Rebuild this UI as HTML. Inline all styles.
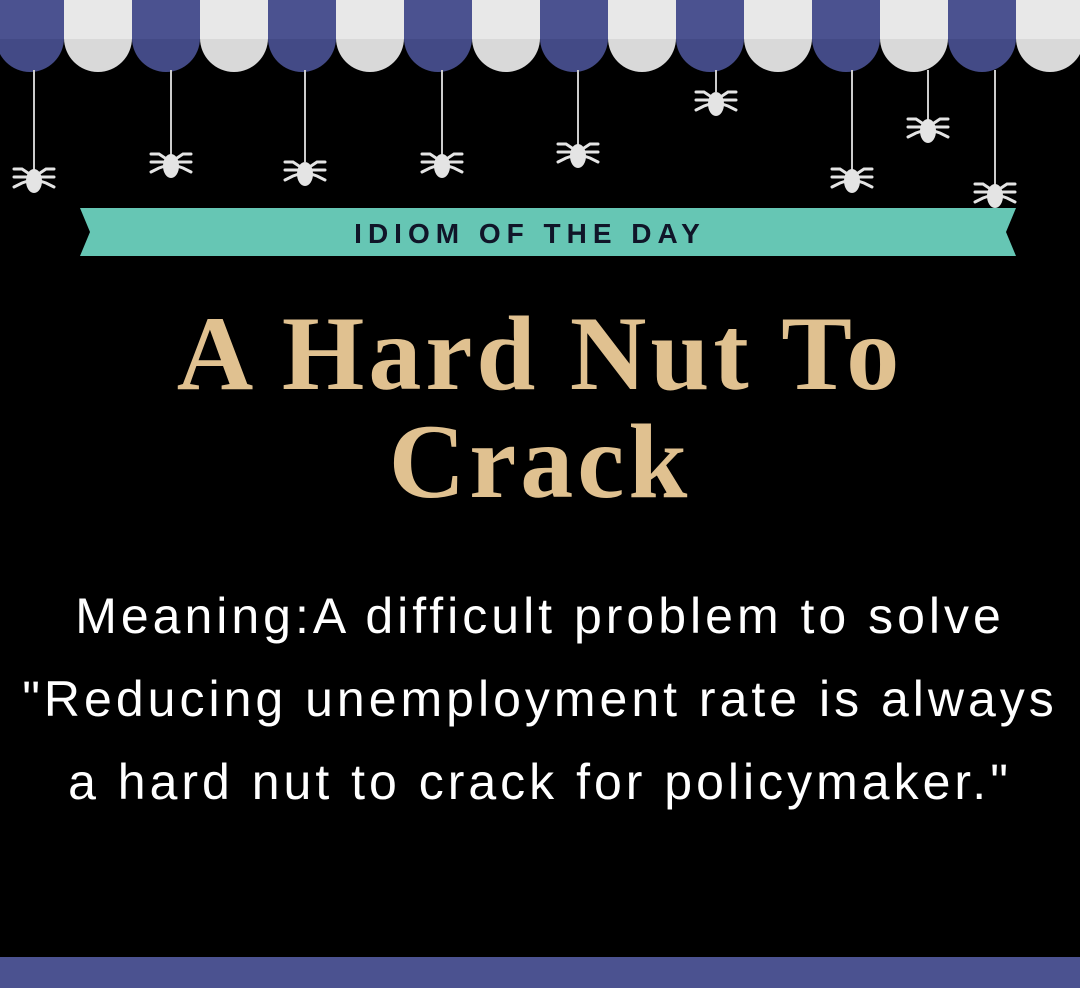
<!DOCTYPE html>
<html><head><style>
body{margin:0;width:1080px;height:988px;background:#000;position:relative;overflow:hidden;font-family:"Liberation Sans",sans-serif}
.s{position:absolute;top:0;width:68px;height:72px;border-radius:0 0 34px 34px;overflow:hidden}
.b{background:#434a86}.b:before{content:"";position:absolute;left:0;top:0;width:100%;height:39px;background:#4b5290}
.w{background:#d9d9d9}.w:before{content:"";position:absolute;left:0;top:0;width:100%;height:39px;background:#e8e8e8}
.t{position:absolute;left:0;width:1080px;text-align:center;white-space:nowrap}
</style></head><body>
<div id="aw"></div>
<svg width="1080" height="260" style="position:absolute;left:0;top:0">
<defs><g id="sp" fill="#e4e4e4" stroke="#e4e4e4" stroke-width="3" stroke-linecap="round">
<ellipse cx="0" cy="4" rx="8" ry="12" stroke="none"/>
<polyline fill="none" points="-6,-4 -12,-8 -20,-8"/><polyline fill="none" points="-6,0 -20,0"/><polyline fill="none" points="-6,4 -12,6 -20,10"/>
<polyline fill="none" points="6,-4 12,-8 20,-8"/><polyline fill="none" points="6,0 20,0"/><polyline fill="none" points="6,4 12,6 20,10"/>
</g></defs>
<g stroke="#ccc" stroke-width="2">
<line x1="34" y1="70" x2="34" y2="170"/><line x1="171" y1="70" x2="171" y2="155"/><line x1="305" y1="70" x2="305" y2="162"/><line x1="442" y1="70" x2="442" y2="155"/><line x1="578" y1="70" x2="578" y2="145"/><line x1="716" y1="70" x2="716" y2="92"/><line x1="852" y1="70" x2="852" y2="170"/><line x1="928" y1="70" x2="928" y2="120"/><line x1="995" y1="70" x2="995" y2="185"/>
</g>
<use href="#sp" x="34" y="177"/><use href="#sp" x="171" y="162"/><use href="#sp" x="305" y="170"/><use href="#sp" x="442" y="162"/><use href="#sp" x="578" y="152"/><use href="#sp" x="716" y="100"/><use href="#sp" x="852" y="177"/><use href="#sp" x="928" y="127"/><use href="#sp" x="995" y="192"/>
<polygon points="80,208 1016,208 1006,232 1016,256 80,256 90,232" fill="#66c6b4"/>
<text x="530" y="243" text-anchor="middle" font-family="Liberation Sans" font-weight="bold" font-size="28" letter-spacing="6" fill="#101528">IDIOM OF THE DAY</text>
</svg>
<div class="t" style="top:300px;font:bold 106px/108px 'Liberation Serif',serif;color:#e0c190;letter-spacing:4px">A Hard Nut To<br>Crack</div>
<div class="t" style="top:575px;font:50px/83px 'Liberation Sans',sans-serif;color:#fff;letter-spacing:4px">Meaning:A difficult problem to solve<br>"Reducing unemployment rate is always<br>a hard nut to crack for policymaker."</div>
<div style="position:absolute;left:0;top:957px;width:1080px;height:31px;background:#4b5290"></div>
<script>
var a=document.getElementById('aw'),h='';for(var i=0;i<17;i++){h+='<div class="s '+(i%2?'w':'b')+'" style="left:'+(-4+68*i)+'px"></div>'}a.innerHTML=h;
</script>
</body></html>
